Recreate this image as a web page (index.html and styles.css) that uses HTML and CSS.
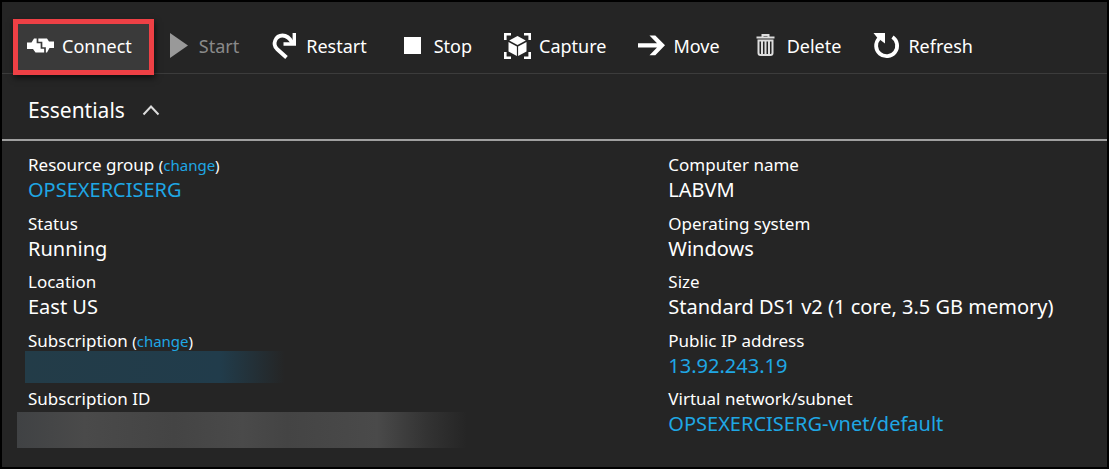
FILE: index.html
```html
<!DOCTYPE html>
<html lang="en">
<head>
<meta charset="utf-8">
<meta name="viewport" content="width=device-width, initial-scale=1">
<title>LABVM</title>
<link rel="stylesheet" href="styles.css">
</head>
<body>
<main class="blade">
  <div class="toolbar" role="toolbar" aria-label="Virtual machine commands">
    <button class="command command-highlighted" type="button">
      <svg class="icon" viewBox="0 0 27 27" aria-hidden="true"><path fill="#fff" d="M0 9.500h4.500L7 5.500h13l2 3h5v6.500h-4.500l-2.500 4.500H8.500L6 16H0z"/><path fill="none" stroke="#3a3a3a" stroke-width="1.700" d="M10.500 5v4.500h4V15h3.500v5"/></svg>
      <span>Connect</span>
    </button>
    <button class="command" type="button" disabled>
      <svg class="icon" viewBox="0 0 27 27" aria-hidden="true"><path fill="#999" d="M6 0 24 12.500 6 25z"/></svg>
      <span>Start</span>
    </button>
    <button class="command" type="button">
      <svg class="icon" viewBox="0 0 27 27" aria-hidden="true"><path fill="none" stroke="#fff" stroke-width="3.800" d="M15.500 24.500 6 16C1 11 4.500 2.500 11.500 2.500c5 0 7.500 3 10 7.500"/><path fill="none" stroke="#fff" stroke-width="3.400" d="M23.300 0v11H12.500"/></svg>
      <span>Restart</span>
    </button>
    <button class="command" type="button">
      <svg class="icon" viewBox="0 0 27 27" aria-hidden="true"><path fill="#fff" d="M5 4h17v17H5z"/></svg>
      <span>Stop</span>
    </button>
    <button class="command" type="button">
      <svg class="icon" viewBox="0 0 27 27" aria-hidden="true"><path fill="none" stroke="#fff" stroke-width="2.600" d="M1.300 7V1.300H7M20 1.300h5.700V7M25.700 19v5.700H20M7 24.700H1.300V19"/><path fill="#fff" d="m13.500 3 8.300 4.500-8.300 4.600-8.300-4.600zM4.500 9l8.400 4.500v9.500L4.500 18.500zM22.500 9v9.500L14.100 23v-9.500z"/></svg>
      <span>Capture</span>
    </button>
    <button class="command" type="button">
      <svg class="icon" viewBox="0 0 27 27" aria-hidden="true"><path fill="#fff" d="M0 10.300h19L11.500 2.500h5.800L27 12.300l-9.700 9.900h-5.800l7.500-7.800H0z"/></svg>
      <span>Move</span>
    </button>
    <button class="command" type="button">
      <svg class="icon" viewBox="0 0 27 27" aria-hidden="true"><path fill="none" stroke="#ddd" stroke-width="2" d="M10.500 3.500V2h6v1.500M4.500 4.500h18"/><path fill="none" stroke="#ddd" stroke-width="2" d="M6.500 7.500h14v12.500q0 2-2 2h-10q-2 0-2-2zM10 8v13M13.500 8v13M17 8v13"/></svg>
      <span>Delete</span>
    </button>
    <button class="command" type="button">
      <svg class="icon" viewBox="0 0 27 27" aria-hidden="true"><path fill="none" stroke="#fff" stroke-width="3.800" d="M19.500 4a10.500 10.500 0 1 1-13.500 1.500"/><path fill="#fff" d="M0.500 0H12V10.500L8 7.500 4.500 5z"/></svg>
      <span>Refresh</span>
    </button>
  </div>

  <button class="essentials-toggle" type="button" aria-expanded="true" aria-controls="essentials">
    <span>Essentials</span>
    <svg class="chevron" viewBox="0 0 18 12" aria-hidden="true"><path fill="none" stroke="#ddd" stroke-width="2" d="m1.500 10.500 7.500-8 7.500 8"/></svg>
  </button>

  <div class="details" id="essentials">
    <dl class="column">
      <div><dt>Resource group <span class="change">(<a href="#">change</a>)</span></dt><dd><a href="#">OPSEXERCISERG</a></dd></div>
      <div><dt>Status</dt><dd>Running</dd></div>
      <div><dt>Location</dt><dd>East US</dd></div>
      <div><dt>Subscription <span class="change">(<a href="#">change</a>)</span></dt><dd class="redacted redacted-name"></dd></div>
      <div><dt>Subscription ID</dt><dd class="redacted redacted-id"></dd></div>
    </dl>
    <dl class="column">
      <div><dt>Computer name</dt><dd>LABVM</dd></div>
      <div><dt>Operating system</dt><dd>Windows</dd></div>
      <div><dt>Size</dt><dd>Standard DS1 v2 (1 core, 3.5 GB memory)</dd></div>
      <div><dt>Public IP address</dt><dd><a href="#">13.92.243.19</a></dd></div>
      <div><dt>Virtual network/subnet</dt><dd><a href="#">OPSEXERCISERG-vnet/default</a></dd></div>
    </dl>
  </div>
</main>
</body>
</html>
```
FILE: styles.css
```css
* {
  box-sizing: border-box;
}

body {
  margin: 0;
  background: #000;
  color: #fff;
  font-family: "Noto Sans", "Open Sans", sans-serif;
}

button {
  padding: 0;
  border: 0;
  background: none;
  color: inherit;
  font-family: inherit;
}

a {
  color: #1fa7e4;
  text-decoration: none;
}

.blade {
  display: flex;
  flex-direction: column;
  min-height: 100vh;
  border: 2px solid #000;
  background: #252525;
}

.toolbar {
  display: flex;
  gap: 32px;
  padding: 20px 25px 0;
  height: 72px;
  border-bottom: 1px solid #3c3c3c;
}

.command {
  position: relative;
  display: flex;
  align-items: center;
  gap: 8px;
  height: 48px;
  font-size: 18px;
  white-space: nowrap;
}

.command:disabled {
  color: #8a8a8a;
}

.command span,
.command .icon {
  position: relative;
  z-index: 1;
}

.command-highlighted::before {
  content: "";
  position: absolute;
  inset: -3px -22px -5px -14px;
  border: 5px solid #ee4045;
  background: #3a3a3a;
  box-shadow: 1px 3px 6px rgba(0, 0, 0, 0.6);
}

.icon {
  flex: none;
  width: 27px;
  height: 27px;
}

.essentials-toggle {
  display: flex;
  align-items: center;
  gap: 17px;
  height: 67px;
  padding: 6px 26px 0;
  border-bottom: 2px solid #a0a0a0;
  font-size: 21px;
}

.chevron {
  width: 18px;
  height: 12px;
}

.details {
  display: flex;
  flex: 1;
  padding: 12px 26px 30px;
}

.column {
  display: flex;
  flex: 1;
  flex-direction: column;
  justify-content: space-between;
  margin: 0;
}

.column:first-child {
  flex: 0 0 641px;
  flex-basis: calc(61% - 2px);
}

dt {
  font-size: 17px;
  line-height: 24px;
}

dd {
  margin: 0;
  height: 26px;
  font-size: 20px;
  line-height: 26px;
}

.change {
  font-size: 15px;
}

.redacted {
  height: 32px;
  margin: -2px 0 -4px -3px;
}

.redacted-name {
  width: 260px;
  background: linear-gradient(90deg, #233c48, #213c4b 75%, #252525);
}

.redacted-id {
  width: 450px;
  height: 36px;
  margin: 1px 0 -11px -11px;
  background: linear-gradient(90deg, #404244, #4a4a4a 15%, #444 35%, #4a4a4a 50%, #444 60%, #4a4a4a 80%, #333 91%, #252525);
}
```
